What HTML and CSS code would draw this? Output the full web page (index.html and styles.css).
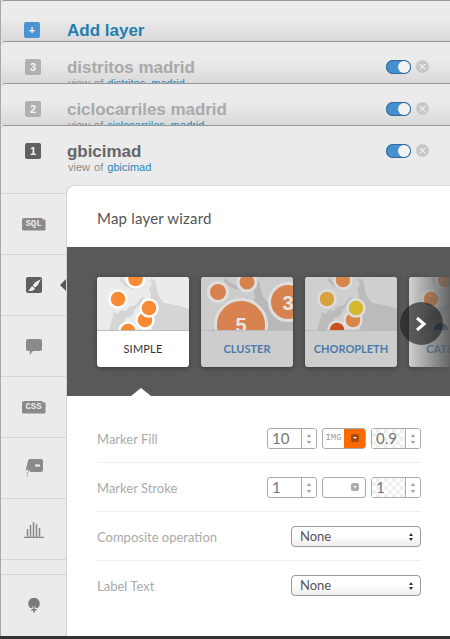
FILE: index.html
```html
<!DOCTYPE html>
<html lang="en">
<head>
<meta charset="utf-8">
<title>Map layer wizard</title>
<link rel="stylesheet" href="styles.css">
</head>
<body>
<svg class="defs" width="0" height="0" aria-hidden="true">
  <symbol id="land" viewBox="0 0 92 53">
    <path d="M56 2l3 4 1 8 3 7 4 5 7 1 9 2 9 3V53H56l-2-5-6-3-4-8 5-3 4-8 1-8-2-6 3-4-2-6z"/>
    <path d="M12 53l3-10 2-8 4 2 3-4 5 1 3-4 7-2 5-7 3-1-3 7-6 5-3 7-6 2-3 6-2 6z"/>
    <path d="M24 0l4 5 6 3 5 5-5-1-6-3-5-5z"/>
  </symbol>
</svg>
<div class="app">
  <section class="layer layer-add">
    <span class="badge badge-add">+</span>
    <span class="add-title">Add layer</span>
  </section>
  <section class="layer layer-back">
    <span class="badge badge-light">3</span>
    <div class="names">
      <div class="name name-light">distritos madrid</div>
      <div class="sub">view of <a>distritos_madrid</a></div>
    </div>
    <span class="toggle"></span><span class="close">×</span>
  </section>
  <section class="layer layer-back">
    <span class="badge badge-light">2</span>
    <div class="names">
      <div class="name name-light">ciclocarriles madrid</div>
      <div class="sub">view of <a>ciclocarriles_madrid</a></div>
    </div>
    <span class="toggle"></span><span class="close">×</span>
  </section>
  <section class="layer layer-front">
    <span class="badge badge-dark">1</span>
    <div class="names">
      <div class="name">gbicimad</div>
      <div class="sub">view of <a>gbicimad</a></div>
    </div>
    <span class="toggle"></span><span class="close">×</span>
  </section>
  <div class="workspace">
    <nav class="rail">
      <div class="rail-item"><span class="tag">SQL</span></div>
      <div class="rail-item rail-active">
        <svg class="ico" width="16" height="16" viewBox="0 0 16 16"><rect width="16" height="16" rx="2" fill="#5f5f5f"/><path d="M15 2L9 5.500 6.800 8.500 9 10.500 11.500 8.300z" fill="#f2f2f2"/><path d="M6.300 9.300C4.300 9.600 5 12.300 2 13.500c2.500.8 6.500.5 6.800-2.300z" fill="#f2f2f2"/></svg>
      </div>
      <div class="rail-item">
        <svg class="ico ico-down" width="16" height="16" viewBox="0 0 16 16"><path d="M2 0h12a2 2 0 0 1 2 2v8a2 2 0 0 1-2 2H7l-3.500 4 .5-4H2a2 2 0 0 1-2-2V2a2 2 0 0 1 2-2z" fill="#8a8a8a"/></svg>
      </div>
      <div class="rail-item"><span class="tag">CSS</span></div>
      <div class="rail-item">
        <svg class="ico" width="18" height="18" viewBox="0 0 18 18"><path d="M3 2a2 2 0 0 1 2-2h11a2 2 0 0 1 2 2v9a2 2 0 0 1-2 2H5.500L4 10.500 1 10z" fill="#8a8a8a"/><rect x="10" y="5.500" width="5" height="2" fill="#f2f2f2"/><path d="M.5 11.500c.5-1.500 3.500-1.500 3.300.2C3.700 13 2.200 13 2.200 14.800M2.200 15.800v1.500" fill="none" stroke="#8a8a8a" stroke-width="1"/></svg>
      </div>
      <div class="rail-item">
        <svg class="ico" width="20" height="17" viewBox="0 0 20 17"><path d="M0 16.500h20M3.500 16V8M6.500 16V4M9.500 16V1M12.500 16V3M15.500 16V7" stroke="#8a8a8a" stroke-width="1.500" fill="none"/></svg>
      </div>
      <div class="rail-gap"></div>
      <div class="rail-item rail-last">
        <svg class="ico" width="12" height="15" viewBox="0 0 12 15"><circle cx="6" cy="5.500" r="5.800" fill="#7a7a7a"/><path d="M6 8.500v6M3 11.500h6" stroke="#ebebeb" stroke-width="3.200"/><path d="M6 9v5.500M3.300 11.800h5.400" stroke="#7a7a7a" stroke-width="1.600"/></svg>
      </div>
    </nav>
    <main class="panel">
      <h1 class="panel-title">Map layer wizard</h1>
      <div class="band">
        <div class="cards">
          <article class="card card-on">
            <svg class="thumb" width="92" height="53" viewBox="0 0 92 53"><rect width="92" height="53" fill="#ebebeb"/><use href="#land" width="92" height="53" fill="#d5d5d5"/>
              <g stroke="#fff" stroke-width="2.500" fill="#fa8a33"><circle cx="38.500" cy="2" r="8.500"/><circle cx="21" cy="22" r="8.500"/><circle cx="48" cy="43" r="8.500"/><circle cx="52" cy="31" r="8.500"/><circle cx="31" cy="54" r="8.500"/></g></svg>
            <div class="card-label">SIMPLE</div>
          </article>
          <article class="card">
            <svg class="thumb" width="92" height="53" viewBox="0 0 92 53"><rect width="92" height="53" fill="#cccccc"/><use href="#land" width="92" height="53" fill="#b8b8b8"/>
              <g stroke="#dedede" stroke-width="3" fill="#d7824f"><circle cx="17" cy="15" r="9.500"/><circle cx="46" cy="5" r="9"/><circle cx="40" cy="48" r="25.500"/><circle cx="87" cy="25" r="18.500"/></g>
              <text x="40" y="55" class="bubble-num bubble-big">5</text><text x="87" y="33" class="bubble-num bubble-big">3</text></svg>
            <div class="card-label">CLUSTER</div>
          </article>
          <article class="card">
            <svg class="thumb" width="92" height="53" viewBox="0 0 92 53"><rect width="92" height="53" fill="#cfcfcf"/><use href="#land" width="92" height="53" fill="#bbbbbb"/>
              <g stroke="#dedede" stroke-width="2.500"><circle cx="38" cy="3" r="8.500" fill="#d9864a"/><circle cx="22" cy="22" r="8.500" fill="#d9a23f"/><circle cx="48" cy="43" r="8.500" fill="#d9864a"/><circle cx="51" cy="31" r="8.500" fill="#d4b92f"/><circle cx="32" cy="53" r="8.500" fill="#c9511a"/></g></svg>
            <div class="card-label">CHOROPLETH</div>
          </article>
          <article class="card">
            <svg class="thumb" width="92" height="53" viewBox="0 0 92 53"><rect width="92" height="53" fill="#cfcfcf"/><use href="#land" width="92" height="53" fill="#bbbbbb"/>
              <g stroke="#dedede" stroke-width="2.500"><circle cx="36" cy="3" r="8.500" fill="#d9864a"/><circle cx="22" cy="22" r="8.500" fill="#d9864a"/><circle cx="32" cy="53" r="8.500" fill="#2c5a8c"/></g></svg>
            <div class="card-label">CATEGORY</div>
          </article>
        </div>
        <div class="fade"></div>
        <span class="next"><svg width="14" height="16" viewBox="0 0 14 16"><path d="M2 2l7 6-7 6" fill="none" stroke="#fff" stroke-width="3"/></svg></span>
        <span class="pointer"></span>
      </div>
      <div class="form">
        <div class="row">
          <span class="label">Marker Fill</span>
          <div class="controls">
            <div class="num"><span class="val">10</span><span class="spin"></span></div>
            <div class="pick"><span class="img">IMG</span><span class="drop drop-on"><i></i></span></div>
            <div class="num num-check"><span class="val">0.9</span><span class="spin"></span></div>
          </div>
        </div>
        <div class="row">
          <span class="label">Marker Stroke</span>
          <div class="controls">
            <div class="num"><span class="val">1</span><span class="spin"></span></div>
            <div class="pick"><span class="img"></span><span class="drop"><i></i></span></div>
            <div class="num num-check"><span class="val">1</span><span class="spin"></span></div>
          </div>
        </div>
        <div class="row">
          <span class="label">Composite operation</span>
          <div class="select">None</div>
        </div>
        <div class="row row-last">
          <span class="label">Label Text</span>
          <div class="select">None</div>
        </div>
      </div>
    </main>
  </div>
  <div class="base"></div>
</div>
</body>
</html>
```
FILE: styles.css
```css
* { box-sizing: border-box; }
html, body { margin: 0; padding: 0; }
body { width: 450px; height: 639px; overflow: hidden; background: #fff; font-family: "Liberation Sans", Arial, sans-serif; }
.defs { position: absolute; }
.app { display: flex; flex-direction: column; height: 639px; border-left: 1px solid #a9a9a9; }

.layer { display: flex; align-items: flex-start; position: relative; height: 42px; overflow: hidden; border-top: 1px solid #969696; border-top-left-radius: 4px; padding-left: 24px; background: linear-gradient(#ebebeb 0, #ebebeb 45%, #d9d9d9 100%); }
.layer-add { height: 41px; padding-top: 21px; border-top-left-radius: 3px; }
.layer-back { padding-top: 17px; }
.layer-front { height: 61px; padding-top: 17px; background: #ebebeb; flex: none; }

.badge { flex: none; width: 16px; height: 16px; border-radius: 2px; color: #f4f4f4; font-size: 11px; font-weight: 700; line-height: 16px; text-align: center; }
.badge-add { background: #4a94d2; margin-left: -1px; margin-right: 1px; }
.badge-light { background: #b0b0b0; }
.badge-dark { background: #5f5f5f; }

.add-title { margin-left: 26px; margin-top: -2px; color: #1f7fb0; font-size: 17px; font-weight: 700; line-height: 22px; }
.names { margin-left: 26px; width: 310px; margin-top: -1px; }
.name { color: #666; font-size: 17px; font-weight: 700; line-height: 20px; letter-spacing: -0.04px; white-space: nowrap; }
.name-light { color: #a9a9a9; }
.sub { margin-top: -2px; margin-left: 1px; color: #8b8b8b; font-size: 11px; line-height: 14px; white-space: nowrap; word-spacing: 1px; }
.sub a { color: #2a86b8; word-spacing: 0; }

.toggle { position: absolute; left: 385px; top: 18px; width: 25px; height: 14px; border-radius: 7px; background: #4790cf; box-shadow: inset 0 0 0 1px #35699b; }
.toggle::after { content: ""; position: absolute; right: 1px; top: 1px; width: 12px; height: 12px; border-radius: 50%; background: #f2f2f2; }
.close { position: absolute; left: 415px; top: 18px; width: 13px; height: 13px; border-radius: 50%; background: #c8c8c8; color: #f4f4f4; font-size: 13px; line-height: 13px; text-align: center; }

.workspace { display: flex; flex: none; height: 450px; background: #ebebeb; }
.rail { flex: none; width: 65px; display: flex; flex-direction: column; padding-top: 7px; }
.rail-item { flex: none; height: 61px; display: flex; align-items: center; justify-content: center; border-top: 1px solid #d6d6d6; }
.rail-gap { flex: none; height: 15px; border-top: 1px solid #d6d6d6; }
.rail-last { height: 61px; border-top: 1px solid #d6d6d6; }
.ico-down { transform: translateY(1px); }
.tag { display: block; width: 24px; height: 13px; background: #8a8a8a; color: #ececec; font-family: "Liberation Mono", monospace; font-size: 9px; font-weight: 700; line-height: 13px; text-align: center; border-radius: 2px; clip-path: polygon(0 0, 21px 0, 21px 2px, 100% 2px, 100% 100%, 0 100%); }

.panel { position: relative; flex: none; width: 384px; height: 450px; background: #fff; border-left: 1px solid #d4d4d4; border-top-left-radius: 8px; overflow: hidden; box-shadow: 0 -1px 0 #d8d8d8; }
.panel-title { margin: 0; height: 61px; padding: 24px 0 0 30px; color: #555; font-family: Lato, sans-serif; font-size: 15px; font-weight: 400; line-height: 16px; letter-spacing: 0.2px; }

.band { position: relative; height: 149px; background-color: #585959; background-image: repeating-linear-gradient(0deg, rgba(255,255,255,.012) 0 1px, transparent 1px 3px), repeating-linear-gradient(90deg, rgba(0,0,0,.02) 0 1px, transparent 1px 3px); overflow: hidden; }
.cards { display: flex; gap: 12px; padding: 30px 0 0 30px; width: 500px; }
.card { flex: none; width: 92px; height: 90px; border-radius: 3px; overflow: hidden; background: #cdcdcd; box-shadow: 0 1px 5px rgba(0,0,0,.35); }
.card-on { background: #fff; }
.thumb { display: block; border-bottom: 1px solid #bbb; height: 54px; }
.card-label { height: 36px; color: #4a7aa8; font-family: Lato, sans-serif; font-size: 11px; font-weight: 700; line-height: 36px; text-align: center; white-space: nowrap; }
.card-on .card-label { color: #333; font-weight: 400; letter-spacing: 0.2px; }
.bubble-num { fill: #e6e6e6; text-anchor: middle; font-family: "Liberation Sans", sans-serif; font-weight: 700; }
.bubble-big { font-size: 20px; }

.fade { position: absolute; right: 0; top: 0; bottom: 0; width: 40px; background: linear-gradient(90deg, rgba(88,89,89,0), rgba(88,89,89,.9)); }
.next { position: absolute; left: 333px; top: 55px; width: 43px; height: 43px; border-radius: 50%; background: rgba(30,30,30,.65); display: flex; align-items: center; justify-content: center; }
.pointer { position: absolute; left: 64px; bottom: 0; width: 0; height: 0; border-left: 10px solid transparent; border-right: 10px solid transparent; border-bottom: 8px solid #fff; }

.form { padding: 0 29px 0 30px; font-family: Lato, sans-serif; }
.row { display: flex; align-items: center; justify-content: space-between; height: 49px; border-bottom: 1px solid #eee; }
.row:first-child { height: 67px; padding-top: 18px; }
.row-last { border-bottom: 0; }
.label { color: #aaa; font-size: 13px; position: relative; top: 1px; }
.row-last .label { top: 0; }
.controls { display: flex; gap: 5px; }
.num { display: flex; width: 50px; height: 21px; border: 1px solid #aaa; border-radius: 3px; overflow: hidden; color: #777; font-size: 15px; line-height: 19px; }
.val { flex: 1; padding-left: 4px; }
.spin { flex: none; width: 15px; border-left: 1px solid #aaa; position: relative; background: #fff; }
.spin::before, .spin::after { content: ""; position: absolute; left: 5px; border-left: 2px solid transparent; border-right: 2px solid transparent; }
.spin::before { top: 5px; border-bottom: 3px solid #999; }
.spin::after { bottom: 4px; border-top: 3px solid #999; }
.num-check .val { background-color: #fff; background-image: conic-gradient(#f0f0f0 25%, #fff 0 50%, #f0f0f0 0 75%, #fff 0); background-size: 8px 8px; }
.pick { display: flex; width: 44px; height: 21px; border: 1px solid #aaa; border-radius: 3px; overflow: hidden; }
.img { flex: 1; color: #999; font-family: "Liberation Mono", monospace; font-size: 9px; line-height: 19px; text-align: center; }
.drop { flex: none; width: 21px; display: flex; align-items: center; justify-content: center; }
.drop i { display: block; width: 8px; height: 8px; border-radius: 2px; background: #aaa; position: relative; }
.drop i::after { content: ""; position: absolute; left: 2px; top: 3px; border-left: 2px solid transparent; border-right: 2px solid transparent; border-top: 2px solid #fff; }
.drop-on { background: #f96a00; margin: -1px -1px -1px 0; width: 22px; }
.drop-on i { background: #a84a08; }
.select { position: relative; width: 130px; height: 21px; border: 1px solid #999; border-radius: 4px; padding-left: 8px; color: #555; font-size: 13px; line-height: 19px; background: linear-gradient(#fff 50%, #ececec); }
.select::before, .select::after { content: ""; position: absolute; right: 7px; border-left: 2px solid transparent; border-right: 2px solid transparent; }
.select::before { top: 6px; border-bottom: 3px solid #333; }
.select::after { bottom: 5px; border-top: 3px solid #333; }

.base { flex: 1; background: #333; margin-left: -1px; }
.rail-active { position: relative; }
.rail-active::after { content: ""; position: absolute; right: -1px; top: 23px; border-top: 7px solid transparent; border-bottom: 7px solid transparent; border-right: 7px solid #585959; }
```
